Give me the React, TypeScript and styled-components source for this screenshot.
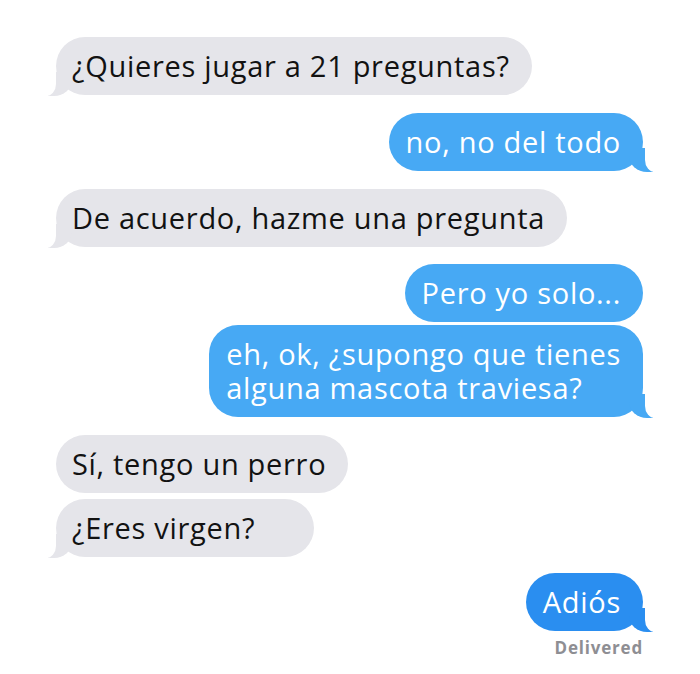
import React from 'react';
import styled, { createGlobalStyle, css } from 'styled-components';

type Side = 'them' | 'me';

interface Message {
  side: Side;
  text: React.ReactNode;
  tail?: boolean;
  gap: number;
  tone?: 'light' | 'dark';
  extraRight?: number;
}

const messages: Message[] = [
  { side: 'them', text: '¿Quieres jugar a 21 preguntas?', tail: true, gap: 0 },
  { side: 'me', text: 'no, no del todo', tail: true, gap: 18 },
  { side: 'them', text: 'De acuerdo, hazme una pregunta', tail: true, gap: 18 },
  { side: 'me', text: 'Pero yo solo...', gap: 17 },
  {
    side: 'me',
    text: (
      <>
        eh, ok, ¿supongo que tienes
        <br />
        alguna mascota traviesa?
      </>
    ),
    tail: true,
    gap: 3,
  },
  { side: 'them', text: 'Sí, tengo un perro', gap: 18 },
  { side: 'them', text: '¿Eres virgen?', tail: true, gap: 6, extraRight: 37 },
  { side: 'me', text: 'Adiós', tail: true, gap: 16, tone: 'dark' },
];

const GRAY = '#e5e5ea';
const BLUE = '#47a9f4';
const BLUE_DARK = '#2a8ef0';

const GlobalStyle = createGlobalStyle`
  html, body {
    margin: 0;
    padding: 0;
    background: #ffffff;
  }
  body {
    font-family: "Open Sans", "Noto Sans", sans-serif;
    -webkit-font-smoothing: antialiased;
  }
`;

const Thread = styled.div`
  width: 700px;
  height: 674px;
  box-sizing: border-box;
  padding: 37px 57px 0 56px;
  display: flex;
  flex-direction: column;
`;

const Row = styled.div<{ $side: Side; $gap: number }>`
  display: flex;
  justify-content: ${(p) => (p.$side === 'me' ? 'flex-end' : 'flex-start')};
  margin-top: ${(p) => p.$gap}px;
`;

const bubbleColor = (side: Side, tone?: 'light' | 'dark') =>
  side === 'them' ? GRAY : tone === 'dark' ? BLUE_DARK : BLUE;

const Bubble = styled.div<{
  $side: Side;
  $tail?: boolean;
  $tone?: 'light' | 'dark';
  $extraRight?: number;
}>`
  position: relative;
  box-sizing: border-box;
  padding: 12px ${(p) => 22 + (p.$extraRight ?? 0)}px 12px
    ${(p) => (p.$side === 'me' ? 17 : 16)}px;
  border-radius: 29px;
  font-size: 29px;
  line-height: 34px;
  letter-spacing: 0.7px;
  background: ${(p) => bubbleColor(p.$side, p.$tone)};
  color: ${(p) => (p.$side === 'them' ? '#121212' : '#ffffff')};

  ${(p) =>
    p.$tail &&
    css`
      &::before,
      &::after {
        content: '';
        position: absolute;
        bottom: -1px;
        height: 24px;
      }
      &::before {
        width: 24px;
        background: ${bubbleColor(p.$side, p.$tone)};
        ${p.$side === 'them'
          ? css`
              left: -8px;
              border-bottom-right-radius: 18px 16px;
            `
          : css`
              right: -10px;
              border-bottom-left-radius: 18px 16px;
            `}
      }
      &::after {
        width: 12px;
        background: #ffffff;
        ${p.$side === 'them'
          ? css`
              left: -12px;
              border-bottom-right-radius: 10px 12px;
            `
          : css`
              right: -14px;
              border-bottom-left-radius: 10px 12px;
            `}
      }
    `}
`;

const Status = styled.div`
  align-self: flex-end;
  margin-top: 5px;
  font-size: 17px;
  font-weight: 700;
  color: #8e8e93;
  letter-spacing: 0.8px;
`;

export default function App() {
  return (
    <>
      <GlobalStyle />
      <Thread>
        {messages.map((m, i) => (
          <Row key={i} $side={m.side} $gap={m.gap}>
            <Bubble $side={m.side} $tail={m.tail} $tone={m.tone} $extraRight={m.extraRight}>
              {m.text}
            </Bubble>
          </Row>
        ))}
        <Status>Delivered</Status>
      </Thread>
    </>
  );
}
